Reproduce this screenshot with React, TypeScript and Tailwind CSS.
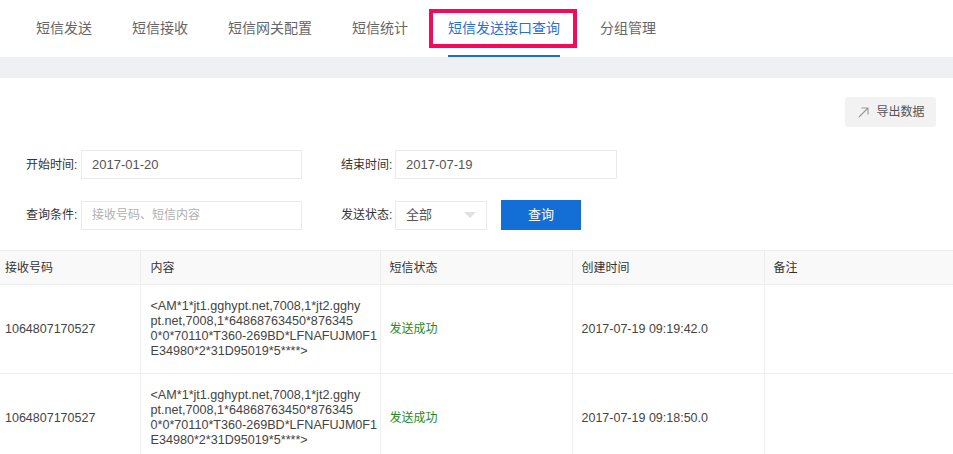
import React from "react";

const FONT = { fontFamily: '"Liberation Sans", Arial, "Noto Sans CJK SC", sans-serif' };

const tabs = ["短信发送", "短信接收", "短信网关配置", "短信统计", "短信发送接口查询", "分组管理"];

const contentLines = [
  "<AM*1*jt1.gghypt.net,7008,1*jt2.gghy",
  "pt.net,7008,1*64868763450*876345",
  "0*0*70110*T360-269BD*LFNAFUJM0F1",
  "E34980*2*31D95019*5****>",
];

const rows = [
  { phone: "1064807170527", time: "2017-07-19 09:19:42.0" },
  { phone: "1064807170527", time: "2017-07-19 09:18:50.0" },
];

export default function App() {
  return (
    <div className="w-[953px] h-[454px] overflow-hidden bg-white text-[#333]" style={FONT}>
      {/* Tabs */}
      <div className="h-[57px] flex items-stretch pl-[36px] gap-[40px]">
        {tabs.map((t, i) => {
          const active = i === 4;
          return (
            <div
              key={t}
              className={`relative flex items-center text-[14px] ${active ? "text-[#2a6fd6]" : "text-[#666]"}`}
            >
              {t}
              {active && (
                <>
                  <div className="absolute left-0 right-0 bottom-0 h-[2px] bg-[#1a6dd6]" />
                  <div className="absolute left-[-19px] right-[-17px] top-[9px] h-[39px] border-4 border-[#f5095b]" />
                </>
              )}
            </div>
          );
        })}
      </div>
      <div className="h-[21px] bg-[#eff0f4]" />

      {/* Export button */}
      <div className="flex justify-end pr-[17px] pt-[19px]">
        <button className="h-[30px] w-[91px] bg-[#f2f2f2] rounded-[3px] flex items-center justify-center gap-[7px] pl-[2px] text-[12px] text-[#555]">
          <svg width="11" height="11" viewBox="0 0 11 11" fill="none" stroke="#999" strokeWidth="1.1">
            <path d="M1 10 L10 1 M3.5 1 H10 V7.5" />
          </svg>
          导出数据
        </button>
      </div>

      {/* Form */}
      <div className="mt-[23px] flex flex-col gap-[21px] pl-[26px]">
        <div className="flex items-center h-[29px]">
          <span className="w-[51px] text-[12px] text-[#333] whitespace-nowrap">开始时间:</span>
          <div className="ml-[4px] w-[221px] h-[29px] border border-[#ebebeb] flex items-center pl-[10px] text-[13px] text-[#555]">
            2017-01-20
          </div>
          <span className="ml-[39px] w-[51px] text-[12px] text-[#333] whitespace-nowrap">结束时间:</span>
          <div className="ml-[3px] w-[222px] h-[29px] border border-[#ebebeb] flex items-center pl-[10px] text-[13px] text-[#555]">
            2017-07-19
          </div>
        </div>
        <div className="flex items-center h-[30px]">
          <span className="w-[51px] text-[12px] text-[#333] whitespace-nowrap">查询条件:</span>
          <div className="ml-[4px] w-[221px] h-[29px] border border-[#ebebeb] flex items-center pl-[10px] text-[12px] text-[#b0b0b0]">
            接收号码、短信内容
          </div>
          <span className="ml-[39px] w-[51px] text-[12px] text-[#333] whitespace-nowrap">发送状态:</span>
          <div className="ml-[3px] w-[92px] h-[29px] border border-[#ebebeb] flex items-center justify-between pl-[10px] pr-[10px] text-[13px] text-[#555]">
            <span>全部</span>
            <svg width="12" height="6" viewBox="0 0 12 6">
              <path d="M0 0 H12 L6 6 Z" fill="#dfe1e6" />
            </svg>
          </div>
          <button className="ml-[14px] w-[80px] h-[30px] bg-[#136fd6] text-white text-[13px] flex items-center justify-center">
            查询
          </button>
        </div>
      </div>

      {/* Table */}
      <table className="mt-[20px] w-[953px] table-fixed border-collapse text-[12px]">
        <colgroup>
          <col className="w-[140px]" />
          <col className="w-[240px]" />
          <col className="w-[192px]" />
          <col className="w-[192px]" />
          <col className="w-[189px]" />
        </colgroup>
        <thead>
          <tr className="h-[34px] bg-[#f9f9f9] border-t border-b border-[#eeeeee]">
            <th className="text-left font-normal pl-[5px] text-[#333]">接收号码</th>
            <th className="text-left font-normal pl-[10px] text-[#333] border-l border-[#eeeeee]">内容</th>
            <th className="text-left font-normal pl-[9px] text-[#333] border-l border-[#eeeeee]">短信状态</th>
            <th className="text-left font-normal pl-[9px] text-[#333] border-l border-[#eeeeee]">创建时间</th>
            <th className="text-left font-normal pl-[9px] text-[#333] border-l border-[#eeeeee]">备注</th>
          </tr>
        </thead>
        <tbody>
          {rows.map((r, i) => (
            <tr key={i} className="h-[89px] border-b border-[#eeeeee]">
              <td className="pl-[5px] text-[12.5px] text-[#444] align-middle">{r.phone}</td>
              <td className="pl-[10px] text-[12.6px] leading-[15px] text-[#444] border-l border-[#eeeeee] align-middle whitespace-nowrap">
                {contentLines.map((l, j) => (
                  <div key={j}>{l}</div>
                ))}
              </td>
              <td className="pl-[9px] text-[#1f8a1f] border-l border-[#eeeeee] align-middle">发送成功</td>
              <td className="pl-[9px] text-[12.5px] text-[#444] border-l border-[#eeeeee] align-middle">{r.time}</td>
              <td className="border-l border-[#eeeeee]" />
            </tr>
          ))}
        </tbody>
      </table>
    </div>
  );
}
